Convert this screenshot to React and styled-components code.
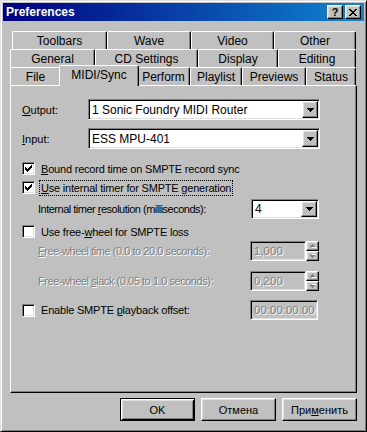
import React from "react";
import styled, { createGlobalStyle } from "styled-components";

const GlobalStyle = createGlobalStyle`
  body {
    margin: 0;
    background: #c0c0c0;
    font-family: "Liberation Sans", Arial, sans-serif;
    font-size: 11px;
    color: #000;
  }
`;

const raised = `
  border: 1px solid;
  border-color: #fff #000 #000 #fff;
  box-shadow: inset -1px -1px #808080, inset 1px 1px #dfdfdf;
`;

const sunken = `
  border: 1px solid;
  border-color: #808080 #fff #fff #808080;
  box-shadow: inset 1px 1px #000, inset -1px -1px #dfdfdf;
`;

const Window = styled.div`
  box-sizing: border-box;
  width: 367px;
  height: 432px;
  background: #c0c0c0;
  border: 1px solid;
  border-color: #dfdfdf #000 #000 #dfdfdf;
  box-shadow: inset 1px 1px #fff, inset -1px -1px #808080;
  padding: 2px;
  display: flex;
  flex-direction: column;
`;

const TitleBar = styled.div`
  height: 18px;
  display: flex;
  align-items: center;
  padding: 0 3px 0 3px;
  background: linear-gradient(to right, #000080, #1084d0);
  color: #fff;
  font-weight: bold;
  font-size: 12px;
`;

const Title = styled.span`
  flex: 1;
`;

const TitleButton = styled.div`
  box-sizing: border-box;
  width: 16px;
  height: 14px;
  margin-left: ${(p) => p.$ml || 0}px;
  background: #c0c0c0;
  ${raised}
  display: flex;
  align-items: center;
  justify-content: center;
  color: #000;
  font-weight: bold;
  font-size: 11px;
  line-height: 1;
`;

const Body = styled.div`
  flex: 1;
  display: flex;
  flex-direction: column;
  padding: 10px 7px 8px 7px;
`;

const TabRow = styled.div`
  display: flex;
  height: 18px;
  margin-left: ${(p) => p.$offset || 0}px;
`;

const Tab = styled.div`
  box-sizing: border-box;
  width: ${(p) => p.$w}px;
  height: 18px;
  border-top: 1px solid #fff;
  border-left: 1px solid #fff;
  border-right: 1px solid #000;
  border-radius: 2px 2px 0 0;
  box-shadow: inset -1px 0 #808080;
  background: #c0c0c0;
  display: flex;
  align-items: center;
  justify-content: center;
  white-space: nowrap;
  font-size: 12px;
`;

const ActiveTab = styled(Tab)`
  width: ${(p) => p.$w + 4}px;
  height: 21px;
  margin: -2px -2px 0 -2px;
  padding-bottom: 2px;
  position: relative;
  z-index: 1;
`;

const Panel = styled.div`
  box-sizing: border-box;
  height: 308px;
  border: 1px solid;
  border-color: #fff #000 #000 #fff;
  box-shadow: inset -1px -1px #808080;
  padding: 13px 11px;
  display: flex;
  flex-direction: column;
`;

const Row = styled.div`
  display: flex;
  align-items: center;
  height: ${(p) => p.$h}px;
  margin-top: ${(p) => p.$mt || 0}px;
  padding-left: ${(p) => p.$indent || 0}px;
`;

const Label = styled.span`
  width: ${(p) => (p.$w ? `${p.$w}px` : "auto")};
  flex: none;
  white-space: nowrap;
  letter-spacing: ${(p) => p.$ls ?? -0.2}px;
  color: ${(p) => (p.$disabled ? "#808080" : "#000")};
  text-shadow: ${(p) => (p.$disabled ? "1px 1px 0 #fff" : "none")};
`;

const U = styled.span`
  text-decoration: underline;
`;

const Select = styled.div`
  box-sizing: border-box;
  width: ${(p) => p.$w}px;
  height: ${(p) => p.$h}px;
  padding: 1px;
  background: #fff;
  ${sunken}
  display: flex;
  align-items: center;
`;

const SelectText = styled.span`
  flex: 1;
  padding-left: 2px;
  white-space: nowrap;
  font-size: 12px;
`;

const ArrowButton = styled.div`
  box-sizing: border-box;
  width: 16px;
  height: 100%;
  background: #c0c0c0;
  ${raised}
  display: flex;
  align-items: center;
  justify-content: center;
`;

const Field = styled.div`
  box-sizing: border-box;
  width: ${(p) => p.$w}px;
  height: 20px;
  padding: 1px 3px;
  background: #c0c0c0;
  ${sunken}
  display: flex;
  align-items: center;
  color: #808080;
  text-shadow: 1px 1px 0 #fff;
  font-size: 11.5px;
`;

const Spin = styled.div`
  width: 13px;
  height: 20px;
  display: flex;
  flex-direction: column;
`;

const SpinHalf = styled.div`
  box-sizing: border-box;
  flex: 1;
  background: #c0c0c0;
  ${raised}
  display: flex;
  align-items: center;
  justify-content: center;
`;

const CheckBox = styled.div`
  box-sizing: border-box;
  width: 13px;
  height: 13px;
  flex: none;
  background: #fff;
  ${sunken}
  display: flex;
  align-items: center;
  justify-content: center;
  margin-right: 6px;
`;

const Focus = styled.span`
  outline: 1px dotted #000;
  outline-offset: 1px;
`;

const Footer = styled.div`
  display: flex;
  justify-content: flex-end;
  gap: 6px;
  margin-top: 5px;
`;

const Button = styled.button`
  box-sizing: border-box;
  width: 75px;
  height: 23px;
  padding: 0;
  background: #c0c0c0;
  font-family: "Liberation Sans", Arial, sans-serif;
  font-size: 11px;
  color: #000;
  ${raised}
  ${(p) =>
    p.$default &&
    `
    border-color: #000;
    box-shadow: inset 1px 1px #fff, inset -1px -1px #000, inset 2px 2px #dfdfdf, inset -2px -2px #808080;
  `}
`;

const DownArrow = () => (
  <svg width="7" height="4" viewBox="0 0 7 4" shapeRendering="crispEdges">
    <path d="M0 0h7v1h-1v1h-1v1h-1v1h-1v-1h-1v-1h-1v-1h-1z" fill="#000" />
  </svg>
);

const SpinArrow = ({ up }) => (
  <svg width="6" height="4" viewBox="0 0 6 4" shapeRendering="crispEdges">
    <g transform={up ? "" : "translate(0 4) scale(1 -1)"}>
      <path d="M3 1h1v1h1v1h1v1h-4z" fill="#fff" />
      <path d="M2 0h1v1h1v1h1v1h-5v-1h1v-1h1z" fill="#808080" />
    </g>
  </svg>
);

const Check = () => (
  <svg width="7" height="7" viewBox="0 0 7 7" shapeRendering="crispEdges">
    <path
      d="M6 0h1v3h-1v1h-1v1h-1v1h-1v1h-1v-1h-1v-1h-1v-3h1v1h1v1h1v-1h1v-1h1z"
      fill="#000"
    />
  </svg>
);

const DropDown = ({ w, h, children }) => (
  <Select $w={w} $h={h}>
    <SelectText>{children}</SelectText>
    <ArrowButton>
      <DownArrow />
    </ArrowButton>
  </Select>
);

const SpinBox = ({ value }) => (
  <>
    <Field $w={56}>{value}</Field>
    <Spin>
      <SpinHalf>
        <SpinArrow up />
      </SpinHalf>
      <SpinHalf>
        <SpinArrow />
      </SpinHalf>
    </Spin>
  </>
);

const tabRows = [
  {
    offset: 2,
    tabs: [
      ["Toolbars", 95],
      ["Wave", 84],
      ["Video", 83],
      ["Other", 82],
    ],
  },
  {
    offset: 0,
    tabs: [
      ["General", 85],
      ["CD Settings", 103],
      ["Display", 80],
      ["Editing", 78],
    ],
  },
  {
    offset: 0,
    tabs: [
      ["File", 51],
      ["MIDI/Sync", 76, true],
      ["Perform", 53],
      ["Playlist", 52],
      ["Previews", 64],
      ["Status", 50],
    ],
  },
];

const App = () => {
  return (
    <>
      <GlobalStyle />
      <Window>
        <TitleBar>
          <Title>Preferences</Title>
          <TitleButton>?</TitleButton>
          <TitleButton $ml={2}>
            <svg width="8" height="7" viewBox="0 0 8 7" shapeRendering="crispEdges">
              <path
                d="M0 0h2v1h1v1h2v-1h1v-1h2v1h-1v1h-1v1h-1v1h1v1h1v1h1v1h-2v-1h-1v-1h-2v1h-1v1h-2v-1h1v-1h1v-1h1v-1h-1v-1h-1v-1h-1z"
                fill="#000"
              />
            </svg>
          </TitleButton>
        </TitleBar>

        <Body>
          {tabRows.map((row, i) => (
            <TabRow key={i} $offset={row.offset}>
              {row.tabs.map(([label, w, active]) =>
                active ? (
                  <ActiveTab key={label} $w={w}>
                    {label}
                  </ActiveTab>
                ) : (
                  <Tab key={label} $w={w}>
                    {label}
                  </Tab>
                )
              )}
            </TabRow>
          ))}

          <Panel>
            <Row $h={21}>
              <Label $w={66} $ls={0}>
                <U>O</U>utput:
              </Label>
              <DropDown w={232} h={21}>
                1 Sonic Foundry MIDI Router
              </DropDown>
            </Row>
            <Row $h={21} $mt={8}>
              <Label $w={66} $ls={0}>
                <U>I</U>nput:
              </Label>
              <DropDown w={232} h={21}>
                ESS MPU-401
              </DropDown>
            </Row>
            <Row $h={19} $mt={10}>
              <CheckBox>
                <Check />
              </CheckBox>
              <Label>
                <U>B</U>ound record time on SMPTE record sync
              </Label>
            </Row>
            <Row $h={19}>
              <CheckBox>
                <Check />
              </CheckBox>
              <Label>
                <Focus>
                  <U>U</U>se internal timer for SMPTE generation
                </Focus>
              </Label>
            </Row>
            <Row $h={20} $mt={2} $indent={16}>
              <Label $w={213} $ls={-0.5}>
                Internal timer <U>r</U>esolution (milliseconds):
              </Label>
              <DropDown w={68} h={20}>
                4
              </DropDown>
            </Row>
            <Row $h={19} $mt={3}>
              <CheckBox />
              <Label>
                Use free-<U>w</U>heel for SMPTE loss
              </Label>
            </Row>
            <Row $h={20} $indent={16}>
              <Label $w={212} $ls={-0.45} $disabled>
                <U>F</U>ree-wheel time (0.0 to 20.0 seconds):
              </Label>
              <SpinBox value="1,000" />
            </Row>
            <Row $h={20} $mt={10} $indent={16}>
              <Label $w={212} $ls={-0.45} $disabled>
                Free-wheel <U>s</U>lack (0.05 to 1.0 seconds):
              </Label>
              <SpinBox value="0,200" />
            </Row>
            <Row $h={20} $mt={9}>
              <CheckBox />
              <Label $w={209}>
                Enable SMPTE <U>p</U>layback offset:
              </Label>
              <Field $w={68}>00:00:00.00</Field>
            </Row>
          </Panel>

          <Footer>
            <Button $default>OK</Button>
            <Button>Отмена</Button>
            <Button>
              При<U>м</U>енить
            </Button>
          </Footer>
        </Body>
      </Window>
    </>
  );
};

export default App;
